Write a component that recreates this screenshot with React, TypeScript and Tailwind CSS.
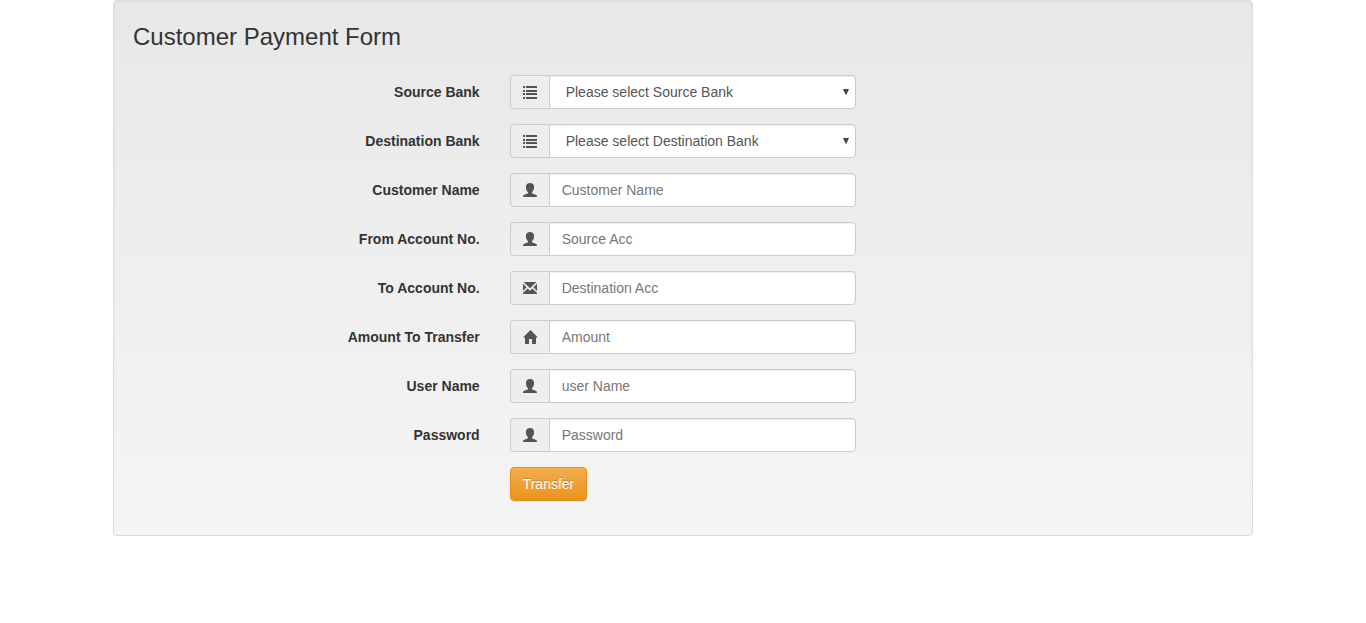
import type { ReactNode } from 'react';

type IconName = 'list' | 'user' | 'envelope' | 'home';

const shapes: Record<IconName, ReactNode> = {
  list: (
    <path d="M0 1h2v2H0zM3 1h11v2H3zM0 5h2v2H0zM3 5h11v2H3zM0 8h2v2H0zM3 8h11v2H3zM0 12h2v2H0zM3 12h11v2H3z" />
  ),
  user: (
    <path d="M7 0C4.500 0 3 1.400 3 3.400V5c0 1.600.8 3.200 2 4.200v1L1.400 11.700C.4 12.100 0 12.700 0 14h14c0-1.300-.4-1.900-1.400-2.300L9 10.200v-1c1.200-1 2-2.600 2-4.200V3.400C11 1.400 9.500 0 7 0z" />
  ),
  envelope: (
    <>
      <path d="M.6 1h12.800L7 7.200z" />
      <path d="M0 2.800L3.500 6.300 0 10z" />
      <path d="M14 2.800V10L10.500 6.300z" />
      <path d="M4.600 7.400L7 9.700l2.400-2.300L14 12.100V13H0v-.9z" />
    </>
  ),
  home: (
    <path d="M7.500 0L15 7.600h-2V13.500a.5.5 0 0 1-.5.5H9V9H6v5H2.500a.5.5 0 0 1-.5-.5V7.600H0z" />
  ),
};

function Icon({ name }: { name: IconName }) {
  return (
    <svg className="h-3.5 w-3.5 overflow-visible" viewBox="0 0 14 14" fill="#555555" aria-hidden="true">
      {shapes[name]}
    </svg>
  );
}

type Field = {
  id: string;
  label: string;
  hint: string;
  icon: IconName;
  kind: 'select' | 'text' | 'password';
};

const fields: Field[] = [
  { id: 'source-bank', label: 'Source Bank', hint: 'Please select Source Bank', icon: 'list', kind: 'select' },
  { id: 'destination-bank', label: 'Destination Bank', hint: 'Please select Destination Bank', icon: 'list', kind: 'select' },
  { id: 'customer-name', label: 'Customer Name', hint: 'Customer Name', icon: 'user', kind: 'text' },
  { id: 'from-account', label: 'From Account No.', hint: 'Source Acc', icon: 'user', kind: 'text' },
  { id: 'to-account', label: 'To Account No.', hint: 'Destination Acc', icon: 'envelope', kind: 'text' },
  { id: 'amount', label: 'Amount To Transfer', hint: 'Amount', icon: 'home', kind: 'text' },
  { id: 'user-name', label: 'User Name', hint: 'user Name', icon: 'user', kind: 'text' },
  { id: 'password', label: 'Password', hint: 'Password', icon: 'user', kind: 'password' },
];

const control =
  'h-full w-full rounded-r border border-[#cccccc] bg-white text-sm text-[#555555] shadow-[inset_0_1px_1px_rgba(0,0,0,0.075)] outline-none placeholder:text-[#777777] focus:border-[#66afe9]';

function FieldRow({ id, label, hint, icon, kind }: Field) {
  return (
    <div className="grid gap-x-[30px] md:grid-cols-3">
      <label htmlFor={id} className="py-[7px] font-bold md:text-right">
        {label}
      </label>
      <div className="flex h-[34px]">
        <span className="flex w-[39px] shrink-0 items-center justify-center rounded-l border border-r-0 border-[#cccccc] bg-[#eeeeee]">
          <Icon name={icon} />
        </span>
        <div className="relative min-w-0 flex-1">
          {kind === 'select' ? (
            <>
              <select id={id} name={id} className={`${control} appearance-none pl-4 pr-6`}>
                <option>{hint}</option>
              </select>
              <svg
                className="pointer-events-none absolute right-[7px] top-3.5 h-1.5 w-1.5"
                viewBox="0 0 6 6"
                fill="#444444"
                aria-hidden="true"
              >
                <path d="M0 0h6L3.500 5.500h-1z" />
              </svg>
            </>
          ) : (
            <input id={id} name={id} type={kind} placeholder={hint} className={`${control} px-3`} />
          )}
        </div>
      </div>
    </div>
  );
}

export default function App() {
  return (
    <main className="mx-auto max-w-[1170px] px-[15px] font-['Liberation_Sans',Arial,sans-serif] text-sm text-[#333333]">
      <form
        className="rounded border border-[#dcdcdc] bg-linear-to-b from-[#e8e8e8] to-[#f5f5f5] px-[19px] pb-[34px] pt-[19px] shadow-[inset_0_1px_3px_rgba(0,0,0,0.05),0_1px_0_rgba(255,255,255,0.1)]"
        onSubmit={(event) => event.preventDefault()}
      >
        <h1 className="mb-5 border-b border-[#e5e5e5] text-2xl leading-[34px]">Customer Payment Form</h1>
        <div className="flex flex-col gap-[15px]">
          {fields.map((field) => (
            <FieldRow key={field.id} {...field} />
          ))}
          <div className="grid gap-x-[30px] md:grid-cols-3">
            <button
              type="submit"
              className="h-[34px] cursor-pointer justify-self-start rounded border border-[#e38d13] bg-linear-to-b from-[#f0ad4e] to-[#eb9316] px-3 text-white shadow-[inset_0_1px_0_rgba(255,255,255,0.15),0_1px_1px_rgba(0,0,0,0.075)] [text-shadow:0_-1px_0_rgba(0,0,0,0.2)] md:col-start-2"
            >
              Transfer
            </button>
          </div>
        </div>
      </form>
    </main>
  );
}
